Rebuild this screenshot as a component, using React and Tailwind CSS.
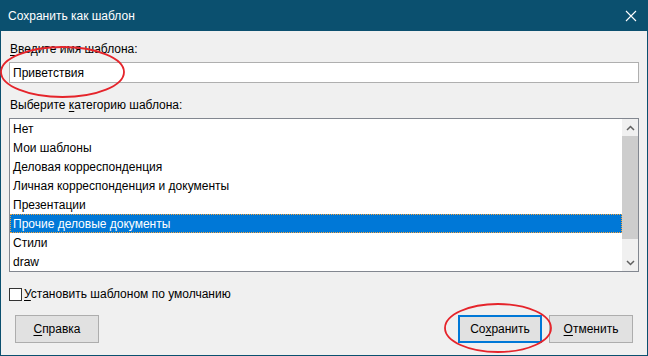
import React from 'react'

const items = [
  'Нет',
  'Мои шаблоны',
  'Деловая корреспонденция',
  'Личная корреспонденция и документы',
  'Презентации',
  'Прочие деловые документы',
  'Стили',
  'draw',
]

function U({ children }) {
  return <span className="underline underline-offset-2">{children}</span>
}

export default function App() {
  const selected = 5
  return (
    <div
      className="relative w-[648px] h-[356px] bg-[#0b506f] flex flex-col text-[12px] text-black"
      style={{ fontFamily: '"Liberation Sans", Arial, sans-serif' }}
    >
      {/* title bar */}
      <div className="h-[31px] shrink-0 flex items-center justify-between pl-[8px] pr-[10px] text-white">
        <span>Сохранить как шаблон</span>
        <svg width="12" height="12" viewBox="0 0 12 12" className="mr-[1px]">
          <path d="M1 1 L11 11 M11 1 L1 11" stroke="white" strokeWidth="1.1" fill="none" />
        </svg>
      </div>

      <div className="flex-1 mx-[1px] mb-[1px] bg-[#f0f0f0] flex flex-col px-[8px]">
        <div className="mt-[10px] h-[16px] leading-[16px] pl-[1px]">
          <U>В</U>ведите имя шаблона:
        </div>
        <div className="mt-[5px] h-[21px] w-[630px] border border-[#7a7a7a]/60 bg-white flex items-center pl-[3px]">
          Приветствия
        </div>

        <div className="mt-[14px] h-[16px] leading-[16px] pl-[1px]">
          Выберите <U>к</U>атегорию шаблона:
        </div>
        <div className="mt-[5px] h-[154px] w-[630px] border border-[#828790] bg-white flex">
          <div className="flex-1 flex flex-col">
            {items.map((it, i) => (
              <div
                key={it}
                className={
                  i === selected
                    ? 'h-[19px] flex items-center pl-[2px] bg-[#0078d7] text-white border border-dotted border-[#f7a33a]'
                    : 'h-[19px] flex items-center pl-[3px]'
                }
              >
                {it}
              </div>
            ))}
          </div>
          <div className="w-[16px] bg-[#f0f0f0] flex flex-col">
            <div className="h-[17px] flex items-center justify-center">
              <svg width="9" height="6" viewBox="0 0 9 6">
                <path d="M1 5 L4.5 1.5 L8 5" stroke="#606060" strokeWidth="1.5" fill="none" />
              </svg>
            </div>
            <div className="h-[103px] bg-[#cdcdcd]" />
            <div className="flex-1" />
            <div className="h-[17px] flex items-center justify-center">
              <svg width="9" height="6" viewBox="0 0 9 6">
                <path d="M1 1 L4.5 4.5 L8 1" stroke="#606060" strokeWidth="1.5" fill="none" />
              </svg>
            </div>
          </div>
        </div>

        <div className="mt-[15px] flex items-center gap-[1px]">
          <div className="w-[13px] h-[13px] border border-[#333333] bg-white" />
          <span className="leading-[14px] ml-[1px]">
            <U>У</U>становить шаблоном по умолчанию
          </span>
        </div>

        <div className="mt-[14px] flex items-center justify-between pl-[6px] pr-[6px]">
          <div className="w-[84px] h-[28px] bg-[#e1e1e1] border border-[#adadad] flex items-center justify-center">
            <span><U>С</U>правка</span>
          </div>
          <div className="flex gap-[7px]">
            <div className="w-[84px] h-[28px] bg-[#e1e1e1] border-2 border-[#0078d7] flex items-center justify-center">
              <span>Со<U>х</U>ранить</span>
            </div>
            <div className="w-[84px] h-[28px] bg-[#e1e1e1] border border-[#adadad] flex items-center justify-center">
              <span><U>О</U>тменить</span>
            </div>
          </div>
        </div>
      </div>

      {/* red annotation ellipses */}
      <svg className="absolute inset-0 pointer-events-none" width="648" height="356">
        <ellipse cx="62.5" cy="72" rx="61.5" ry="25" stroke="#e5242b" strokeWidth="1.8" fill="none" />
        <ellipse cx="498" cy="328" rx="53" ry="24" stroke="#e5242b" strokeWidth="1.8" fill="none" />
      </svg>
    </div>
  )
}
